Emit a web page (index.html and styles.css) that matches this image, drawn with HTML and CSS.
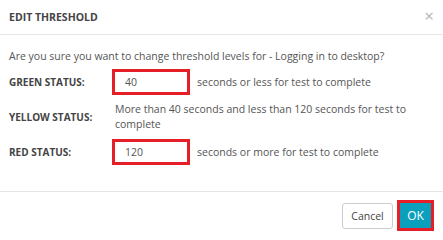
FILE: index.html
```html
<!DOCTYPE html>
<html>
<head>
<meta charset="utf-8">
<link rel="stylesheet" href="styles.css">
</head>
<body>
<div class="modal">
  <div class="header">
    <div class="title">EDIT THRESHOLD</div>
    <div class="close">&#215;</div>
  </div>
  <div class="content">
    <p class="question">Are you sure you want to change threshold levels for - Logging in to desktop?</p>
    <div class="grid">
      <div class="label">GREEN STATUS:</div>
      <div class="value"><span class="box">40</span><span class="note">seconds or less for test to complete</span></div>
      <div class="label yl">YELLOW STATUS:</div>
      <div class="value yv">More than 40 seconds and less than 120 seconds for test to complete</div>
      <div class="label">RED STATUS:</div>
      <div class="value"><span class="box">120</span><span class="note">seconds or more for test to complete</span></div>
    </div>
  </div>
  <div class="footer">
    <span class="btn cancel">Cancel</span>
    <span class="btn ok">OK</span>
  </div>
</div>
</body>
</html>
```
FILE: styles.css
```css
html, body {
  margin: 0;
  padding: 0;
  background: #fff;
}
body {
  font-family: "Open Sans", "Liberation Sans", sans-serif;
  color: #555;
  font-size: 10.5px;
}
.modal {
  width: 443px;
  height: 239px;
  display: flex;
  flex-direction: column;
}
.header {
  height: 35px;
  box-sizing: border-box;
  border-bottom: 1px solid #e5e5e5;
  display: flex;
  align-items: center;
  justify-content: space-between;
  padding: 0 9px 0 9px;
}
.title {
  font-weight: bold;
  font-size: 10.5px;
  color: #444;
  margin-top: -1px;
}
.close {
  font-size: 17px;
  color: #b5b5b5;
  line-height: 1;
  margin-top: -4px;
}
.content {
  padding: 13px 9px 0 9px;
  height: 157px;
  box-sizing: border-box;
  border-bottom: 1px solid #e5e5e5;
}
.question {
  margin: 0 0 5px 0;
  line-height: 16px;
}
.grid {
  display: grid;
  grid-template-columns: 103px 1fr;
  row-gap: 7px;
  align-items: center;
}
.label {
  font-weight: bold;
  font-size: 10px;
  color: #444;
}
.value {
  display: flex;
  align-items: center;
}
.box {
  width: 78px;
  height: 26px;
  box-sizing: border-box;
  border: 3px solid #e61e28;
  padding-left: 10px;
  display: flex;
  align-items: center;
  margin-right: 7px;
}
.yv {
  padding-left: 3px;
  line-height: 15px;
}
.footer {
  flex: 1;
  display: flex;
  justify-content: flex-end;
  align-items: center;
  padding: 0 9px 0 0;
  gap: 4px;
}
.btn {
  height: 26px;
  box-sizing: border-box;
  display: flex;
  align-items: center;
  justify-content: center;
  font-size: 10.5px;
}
.cancel {
  width: 51px;
  border: 1px solid #ccc;
  border-radius: 3px;
  color: #444;
}
.ok {
  width: 37px;
  height: 31px;
  background: #0aa0bd;
  border: 3px solid #e61e28;
  color: #fff;
  font-size: 12px;
}
```
